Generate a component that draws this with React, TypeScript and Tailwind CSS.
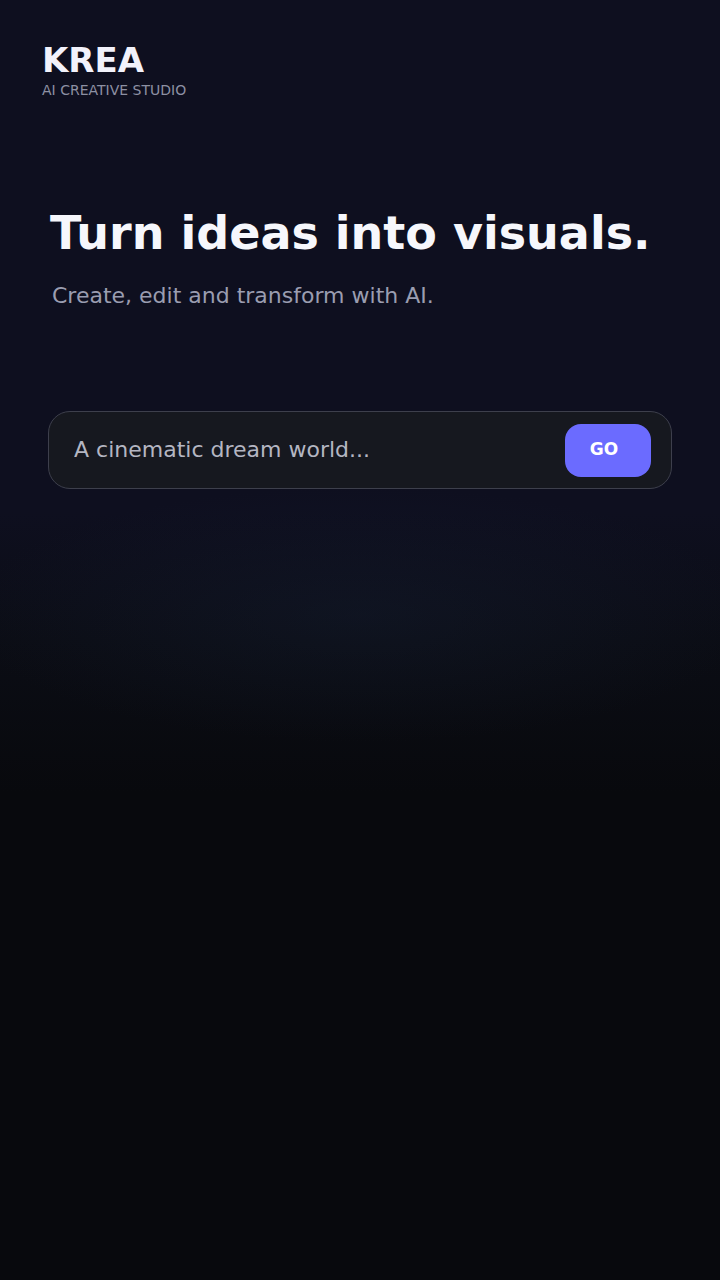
import React from "react";

export default function App() {
  return (
    <div className="min-h-[1280px] w-full font-['DejaVu_Sans',sans-serif] bg-[#08090d] bg-[radial-gradient(ellipse_55%_10%_at_50%_48%,rgba(22,32,52,0.35),transparent),linear-gradient(to_bottom,#0e0f1f_0%,#0e0f1f_40%,#0b0d15_50%,#08090d_62%)]">
      <header className="pl-[42px] pt-[40px]">
        <div className="text-[34px] leading-[40px] font-bold text-[#f2f2fb]">KREA</div>
        <div className="mt-[2px] text-[14px] leading-[16px] text-[#8d90a3]">AI CREATIVE STUDIO</div>
      </header>
      <main className="px-[48px] pt-[112px]">
        <h1 className="pl-[2px] text-[46px] leading-[46px] font-bold text-[#f6f7fc] whitespace-nowrap">
          Turn ideas into visuals.
        </h1>
        <p className="mt-[26px] pl-[4px] text-[22px] leading-[28px] text-[#9a9db0]">
          Create, edit and transform with AI.
        </p>
        <div className="mt-[101px] flex h-[78px] items-center rounded-[22px] border-[1.5px] border-[#3d3f4c] bg-[#16181f] pl-[25px] pr-[20px]">
          <input
            className="min-w-0 flex-1 bg-transparent pb-[2px] text-[22px] text-[#b4b6c2] outline-none placeholder:text-[#b4b6c2]"
            placeholder="A cinematic dream world..."
          />
          <button className="flex h-[53px] w-[86px] items-center justify-center rounded-[16px] bg-[#6b6bff] pb-[1px] pr-[8px] text-[17px] font-bold text-white">
            GO
          </button>
        </div>
      </main>
    </div>
  );
}
